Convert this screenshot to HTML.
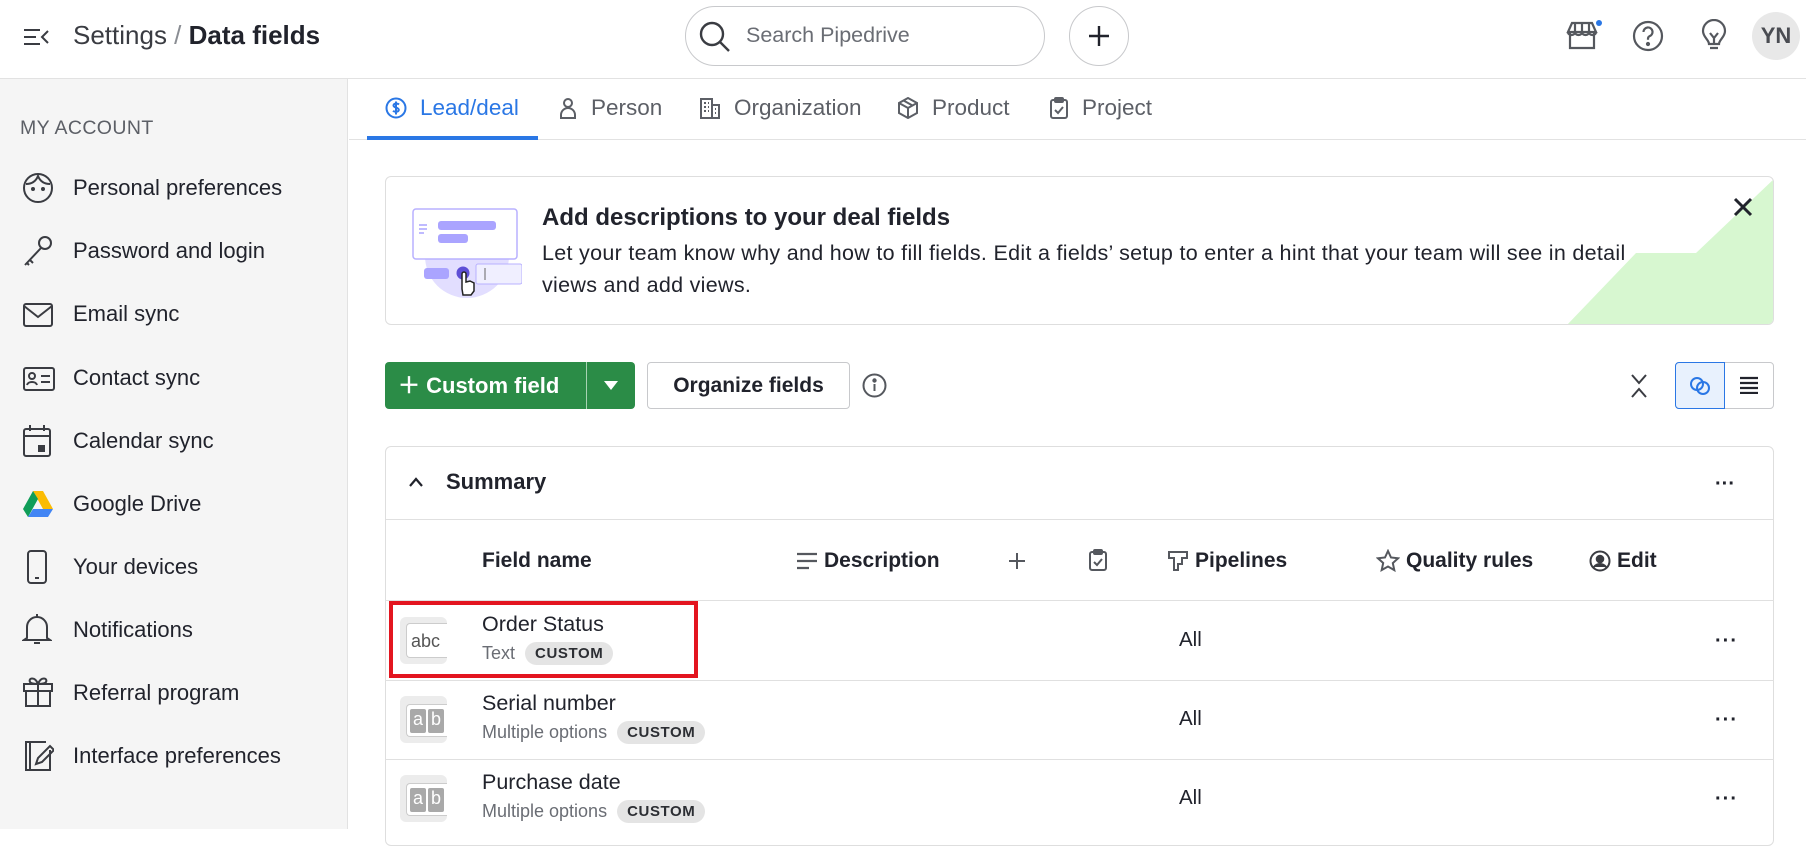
<!DOCTYPE html>
<html><head><meta charset="utf-8"><style>
*{box-sizing:border-box;margin:0;padding:0}
body{width:1806px;height:829px;overflow:hidden;font-family:"Liberation Sans",sans-serif;color:#21232c;background:#fff;position:relative}
.a{position:absolute}
svg{display:block}
.side{left:0;top:79px;width:348px;height:750px;background:#f5f5f5;border-right:1px solid #e2e2e2}
.si{position:absolute;left:73px;font-size:22px;color:#21232c;white-space:nowrap}
.ic{position:absolute;left:22px}
.tab{position:absolute;top:95px;font-size:22.5px;color:#5c5f66;display:flex;align-items:center;gap:13px}
.hd{position:absolute;top:549px;font-size:21px;font-weight:bold;display:flex;align-items:center;gap:6px}
.row{position:absolute;left:385px;width:1389px;border-top:1px solid #e0e0e0}
.fi{position:absolute;left:15px;width:47px;height:47px;border-radius:6px;background:#ececec}
.nm{position:absolute;left:97px;font-size:21.5px}
.sub{position:absolute;left:97px;font-size:18px;color:#6a6d74;display:flex;align-items:center;gap:10px}
.pill{background:#e4e4e4;color:#2c2e33;font-weight:bold;font-size:15px;padding:3px 10px;border-radius:12px;letter-spacing:.6px}
.all{position:absolute;left:794px;font-size:20.5px}
.dots{position:absolute;left:1330px;font-size:20px;font-weight:bold;letter-spacing:1px}
</style></head><body>
<div class="a" style="left:0;top:0;width:1806px;height:79px;border-bottom:1px solid #e2e2e2;background:#fff"></div>
<svg class="a" style="left:22px;top:26px" width="28" height="22" viewBox="0 0 28 22" fill="none" stroke="#3a3c42" stroke-width="2"><path d="M2 4h16M2 11h12M2 18h16M26 5l-6 6 6 6"/></svg>
<div class="a" style="left:73px;top:20px;font-size:26px;color:#3a3c42">Settings <span style="color:#8a8d93">/</span> <b style="color:#21232c">Data fields</b></div>
<div class="a" style="left:685px;top:6px;width:360px;height:60px;border:1px solid #c8c9cc;border-radius:30px"></div>
<svg class="a" style="left:698px;top:20px" width="34" height="34" viewBox="0 0 34 34" fill="none" stroke="#3a3c42" stroke-width="2.4"><circle cx="14" cy="14" r="11"/><path d="M22 22l9 9"/></svg>
<div class="a" style="left:746px;top:23px;font-size:21.5px;color:#6a6d74">Search Pipedrive</div>
<div class="a" style="left:1069px;top:6px;width:60px;height:60px;border:1px solid #c8c9cc;border-radius:50%"></div>
<svg class="a" style="left:1088px;top:25px" width="22" height="22" stroke="#21232c" stroke-width="2.4"><path d="M11 1v20M1 11h20"/></svg>
<svg class="a" style="left:1566px;top:20px" width="36" height="32" viewBox="0 0 36 32" fill="none" stroke="#55585e" stroke-width="2.2"><path d="M4 12v16h24V12M2 12l4-9h20l4 9zM2 12c0 4 7 4 7 0 0 4 7 4 7 0 0 4 7 4 7 0 0 4 7 4 7 0M9 4v8M16 4v8M23 4v8"/><circle cx="33" cy="3" r="3" fill="#2a77e5" stroke="none"/></svg>
<svg class="a" style="left:1632px;top:20px" width="32" height="32" viewBox="0 0 32 32" fill="none" stroke="#55585e" stroke-width="2.2"><circle cx="16" cy="16" r="14"/><path d="M11.5 12a4.5 4.5 0 1 1 6 4.2c-1 .5-1.5 1.3-1.5 2.5v1"/><circle cx="16" cy="24" r="1" fill="#55585e"/></svg>
<svg class="a" style="left:1700px;top:19px" width="28" height="34" viewBox="0 0 28 34" fill="none" stroke="#55585e" stroke-width="2.2"><path d="M9 25c0-4-6-7-6-13a11 11 0 0 1 22 0c0 6-6 9-6 13zM10 29h8M10 14l4 5 4-5M14 19v6"/></svg>
<div class="a" style="left:1752px;top:12px;width:48px;height:48px;border-radius:50%;background:#e8e8e8;font-size:22px;font-weight:bold;color:#4a4c52;text-align:center;line-height:48px">YN</div>
<div class="a side"></div>
<div class="a" style="left:20px;top:117px;font-size:19.5px;color:#5c5f66;letter-spacing:.4px">MY ACCOUNT</div>
<div class="si" style="top:175px">Personal preferences</div>
<div class="si" style="top:238px">Password and login</div>
<div class="si" style="top:301px">Email sync</div>
<div class="si" style="top:365px">Contact sync</div>
<div class="si" style="top:428px">Calendar sync</div>
<div class="si" style="top:491px">Google Drive</div>
<div class="si" style="top:554px">Your devices</div>
<div class="si" style="top:617px">Notifications</div>
<div class="si" style="top:680px">Referral program</div>
<div class="si" style="top:743px">Interface preferences</div>
<svg class="ic" style="top:172px" width="32" height="32" viewBox="0 0 32 32" fill="none" stroke="#3a3c42" stroke-width="2"><circle cx="16" cy="16" r="14"/><path d="M4 12c6 0 10-3 12-8 2 5 6 8 12 8"/><circle cx="11" cy="17" r="1" fill="#3a3c42"/><circle cx="21" cy="17" r="1" fill="#3a3c42"/></svg>
<svg class="ic" style="top:234px" width="32" height="34" viewBox="0 0 32 34" fill="none" stroke="#3a3c42" stroke-width="2"><circle cx="23" cy="9" r="6"/><path d="M19 14L3 31M8 26l3 3M5 29l2 2"/></svg>
<svg class="ic" style="top:302px" width="32" height="26" viewBox="0 0 32 26" fill="none" stroke="#3a3c42" stroke-width="2"><rect x="2" y="2" width="28" height="22" rx="2"/><path d="M2 4l14 11L30 4"/></svg>
<svg class="ic" style="top:364px" width="34" height="30" viewBox="0 0 34 30" fill="none" stroke="#3a3c42" stroke-width="2"><rect x="2" y="4" width="30" height="22" rx="2"/><circle cx="10" cy="12" r="3"/><path d="M5 21c1-4 9-4 10 0M19 12h9M19 18h9"/></svg>
<svg class="ic" style="top:424px" width="30" height="34" viewBox="0 0 30 34" fill="none" stroke="#3a3c42" stroke-width="2"><rect x="2" y="5" width="26" height="27" rx="2"/><path d="M2 12h26M8 1v6M22 1v6"/><rect x="17" y="22" width="5" height="5" fill="#3a3c42"/></svg>
<svg class="ic" style="top:490px" width="32" height="28" viewBox="0 0 32 28"><path d="M11 1h10l10 18H21z" fill="#fbbc04"/><path d="M11 1L1 19l5 8 10-18z" fill="#0f9d58"/><path d="M6 27h20l5-8H11z" fill="#4285f4"/></svg>
<svg class="ic" style="top:549px" width="30" height="36" viewBox="0 0 30 36" fill="none" stroke="#3a3c42" stroke-width="2"><rect x="6" y="2" width="18" height="32" rx="3"/><path d="M13 29h4"/></svg>
<svg class="ic" style="top:612px" width="30" height="34" viewBox="0 0 30 34" fill="none" stroke="#3a3c42" stroke-width="2"><path d="M5 26V15a10 10 0 0 1 20 0v11l3 2H2zM12 31h6M15 2v3"/></svg>
<svg class="ic" style="top:674px" width="32" height="34" viewBox="0 0 32 34" fill="none" stroke="#3a3c42" stroke-width="2"><rect x="2" y="10" width="28" height="7"/><path d="M4 17v15h24V17M16 10v22M16 10c-3-8-10-6-8-2 1 2 8 2 8 2zM16 10c3-8 10-6 8-2-1 2-8 2-8 2z"/></svg>
<svg class="ic" style="top:738px" width="32" height="34" viewBox="0 0 32 34" fill="none" stroke="#3a3c42" stroke-width="2"><path d="M24 4H4v28h24V12M8 4v28M14 26l2-6 12-12 4 4-12 12z"/></svg>
<div class="a" style="left:349px;top:139px;width:1457px;height:1px;background:#e2e2e2"></div>
<div class="a" style="left:367px;top:136px;width:171px;height:4px;background:#2a77e5"></div>
<div class="tab" style="left:385px;color:#2a77e5"><svg width="22" height="22" viewBox="0 0 22 22" fill="none" stroke="#2a77e5" stroke-width="2"><circle cx="11" cy="11" r="9.5"/><path d="M14 7.5c-1-1-5-1.5-5.5.8C8 11 14 10 13.8 13c-.3 2.3-4.5 2-5.8.8M11 4.5v13"/></svg>Lead/deal</div>
<div class="tab" style="left:558px"><svg width="20" height="22" viewBox="0 0 20 22" fill="none" stroke="#5c5f66" stroke-width="2"><circle cx="10" cy="6" r="4"/><path d="M3 21v-3a7 7 0 0 1 14 0v3z"/></svg>Person</div>
<div class="tab" style="left:699px"><svg width="22" height="22" viewBox="0 0 22 22" fill="none" stroke="#5c5f66" stroke-width="2"><path d="M2 21V2h11v19M13 8h7v13M1 21h20M5 6h2M9 6h1M5 10h2M9 10h1M5 14h2M9 14h1M16 12h1M16 16h1"/></svg>Organization</div>
<div class="tab" style="left:897px"><svg width="22" height="22" viewBox="0 0 22 22" fill="none" stroke="#5c5f66" stroke-width="2"><path d="M11 1l9 5v10l-9 5-9-5V6zM2 6l9 5 9-5M11 11v10M6.5 3.5l9 5"/></svg>Product</div>
<div class="tab" style="left:1049px"><svg width="20" height="22" viewBox="0 0 20 22" fill="none" stroke="#5c5f66" stroke-width="2"><rect x="2" y="3" width="16" height="18" rx="2"/><rect x="6" y="1" width="8" height="4" rx="1"/><path d="M6 13l3 3 5-6"/></svg>Project</div>
<div class="a" style="left:385px;top:176px;width:1389px;height:149px;border:1px solid #dedede;border-radius:6px;overflow:hidden">
<svg class="a" style="left:1180px;top:0" width="210" height="149" viewBox="0 0 210 149"><path d="M210 0v149H0L70 76h60z" fill="#d7f7d0"/></svg>
</div>
<svg class="a" style="left:410px;top:206px" width="112" height="96" viewBox="0 0 112 96"><circle cx="57" cy="50" r="42" fill="#e2deff"/><rect x="3" y="3" width="104" height="50" rx="3" fill="#fff" stroke="#b8b0ff" stroke-width="1.5"/><rect x="28" y="15" width="58" height="9" rx="3" fill="#aaa4ff"/><rect x="28" y="28" width="30" height="9" rx="3" fill="#aaa4ff"/><path d="M9 19h8M9 23h8M9 27h5" stroke="#aaa4ff" stroke-width="1.5"/><rect x="14" y="62" width="25" height="11" rx="3" fill="#aaa4ff"/><rect x="66" y="58" width="46" height="20" rx="2" fill="#f0efff" stroke="#b8b0ff"/><path d="M75 62v12" stroke="#666"/><circle cx="53" cy="67" r="6.5" fill="#5e4fd6"/><path d="M52 83v-15a2 2 0 0 1 4 0v8l4-1 4 2v8l-3 4h-8z" fill="#fff" stroke="#222" stroke-width="1.5"/></svg>
<div class="a" style="left:542px;top:204px;font-size:24px;font-weight:bold">Add descriptions to your deal fields</div>
<div class="a" style="left:542px;top:237px;font-size:21.5px;letter-spacing:.3px;line-height:32px;width:1112px">Let your team know why and how to fill fields. Edit a fields’ setup to enter a hint that your team will see in detail views and add views.</div>
<svg class="a" style="left:1733px;top:197px" width="20" height="20" stroke="#21232c" stroke-width="3"><path d="M2 2l16 16M18 2L2 18"/></svg>
<div class="a" style="left:385px;top:362px;width:250px;height:47px;background:#2b8c47;border-radius:4px"></div>
<div class="a" style="left:586px;top:362px;width:1px;height:47px;background:#a7d3b3"></div>
<div class="a" style="left:398px;top:368px;font-size:22px;font-weight:bold;color:#fff">＋&nbsp;Custom field</div>
<svg class="a" style="left:604px;top:381px" width="14" height="9"><path d="M0 0h14L7 9z" fill="#fff"/></svg>
<div class="a" style="left:647px;top:362px;width:203px;height:47px;border:1px solid #c8c9cc;border-radius:4px;font-size:21px;font-weight:bold;text-align:center;line-height:45px">Organize fields</div>
<svg class="a" style="left:862px;top:373px" width="25" height="25" viewBox="0 0 25 25" fill="none" stroke="#55585e" stroke-width="2"><circle cx="12.5" cy="12.5" r="11"/><path d="M12.5 11v7"/><circle cx="12.5" cy="7.5" r="1.2" fill="#55585e"/></svg>
<svg class="a" style="left:1629px;top:373px" width="20" height="26" fill="none" stroke="#3a3c42" stroke-width="2"><path d="M3 2l7 8 7-8M3 24l7-8 7 8"/></svg>
<div class="a" style="left:1675px;top:362px;width:99px;height:47px;border:1px solid #c8c9cc;border-radius:4px"></div>
<div class="a" style="left:1675px;top:362px;width:50px;height:47px;border:1px solid #2a77e5;border-radius:4px 0 0 4px;background:#e8f1fd"></div>
<svg class="a" style="left:1688px;top:374px" width="24" height="24" fill="none" stroke="#2a77e5" stroke-width="2"><circle cx="9" cy="10" r="6"/><circle cx="15" cy="14" r="6"/></svg>
<svg class="a" style="left:1739px;top:376px" width="20" height="18" stroke="#21232c" stroke-width="2.2"><path d="M1 2h18M1 7h18M1 12h18M1 17h18"/></svg>
<div class="a" style="left:385px;top:446px;width:1389px;height:400px;border:1px solid #dedede;border-radius:6px"></div>
<svg class="a" style="left:408px;top:477px" width="16" height="10" fill="none" stroke="#21232c" stroke-width="2.2"><path d="M2 9l6-7 6 7"/></svg>
<div class="a" style="left:446px;top:469px;font-size:22px;font-weight:bold">Summary</div>
<div class="a" style="left:1715px;top:473px;font-size:20px;font-weight:bold">···</div>
<div class="a" style="left:386px;top:519px;width:1387px;height:1px;background:#e0e0e0"></div>
<div class="hd" style="left:482px">Field name</div>
<div class="hd" style="left:796px"><svg width="22" height="18" stroke="#55585e" stroke-width="2.2"><path d="M1 2h20M1 9h20M1 16h12"/></svg>Description</div>
<svg class="a" style="left:1008px;top:552px" width="18" height="18" stroke="#55585e" stroke-width="2"><path d="M9 1v16M1 9h16"/></svg>
<svg class="a" style="left:1088px;top:548px" width="20" height="24" viewBox="0 0 20 24" fill="none" stroke="#55585e" stroke-width="2"><rect x="2" y="4" width="16" height="18" rx="2"/><rect x="6" y="2" width="8" height="4" rx="1"/><path d="M6 14l3 3 5-6"/></svg>
<div class="hd" style="left:1167px"><svg width="22" height="22" viewBox="0 0 22 22" fill="none" stroke="#55585e" stroke-width="2"><path d="M2 2h18v6h-5v6h-4v6H7V8H2z"/></svg>Pipelines</div>
<div class="hd" style="left:1376px"><svg width="24" height="24" viewBox="0 0 24 24" fill="none" stroke="#55585e" stroke-width="2"><path d="M12 2l3 6.5 7 .8-5.2 4.8 1.5 7L12 17.5 5.7 21l1.5-7L2 9.3l7-.8z"/></svg>Quality rules</div>
<div class="hd" style="left:1589px"><svg width="22" height="22" viewBox="0 0 22 22" fill="none" stroke="#3a3c42" stroke-width="2"><circle cx="11" cy="11" r="9.5"/><circle cx="11" cy="9" r="3.3" fill="#3a3c42"/><path d="M5 17c3-4 9-4 12 0" fill="#3a3c42"/></svg>Edit</div>
<div class="row" style="top:600px;height:80px">
 <div class="fi" style="top:16px"><div style="position:absolute;left:6px;top:6px;width:41px;height:35px;background:#fff;border:1px solid #ccc;border-right:none;border-radius:4px 0 0 4px;font-size:18px;color:#555;padding:7px 0 0 4px">abc</div></div>
 <div class="nm" style="top:11px">Order Status</div>
 <div class="sub" style="top:41px">Text <span class="pill">CUSTOM</span></div>
 <div class="all" style="top:27px">All</div><div class="dots" style="top:29px">···</div>
</div>
<div class="row" style="top:680px;height:79px">
 <div class="fi" style="top:15px"><div style="position:absolute;left:6px;top:8px;width:41px;height:33px;background:#fff;border:1px solid #ccc;border-right:none;border-radius:4px 0 0 4px"><span style="position:absolute;left:3px;top:4px;width:16px;height:24px;background:#a9a9a9;color:#fff;font-size:18px;text-align:center;border-radius:2px">a</span><span style="position:absolute;left:21px;top:4px;width:16px;height:24px;background:#a9a9a9;color:#fff;font-size:18px;text-align:center;border-radius:2px">b</span></div></div>
 <div class="nm" style="top:10px">Serial number</div>
 <div class="sub" style="top:40px">Multiple options <span class="pill">CUSTOM</span></div>
 <div class="all" style="top:26px">All</div><div class="dots" style="top:28px">···</div>
</div>
<div class="row" style="top:759px;height:80px">
 <div class="fi" style="top:15px"><div style="position:absolute;left:6px;top:8px;width:41px;height:33px;background:#fff;border:1px solid #ccc;border-right:none;border-radius:4px 0 0 4px"><span style="position:absolute;left:3px;top:4px;width:16px;height:24px;background:#a9a9a9;color:#fff;font-size:18px;text-align:center;border-radius:2px">a</span><span style="position:absolute;left:21px;top:4px;width:16px;height:24px;background:#a9a9a9;color:#fff;font-size:18px;text-align:center;border-radius:2px">b</span></div></div>
 <div class="nm" style="top:10px">Purchase date</div>
 <div class="sub" style="top:40px">Multiple options <span class="pill">CUSTOM</span></div>
 <div class="all" style="top:26px">All</div><div class="dots" style="top:28px">···</div>
</div>
<div class="a" style="left:389px;top:601px;width:309px;height:77px;border:4px solid #e3151f"></div>
</body></html>
